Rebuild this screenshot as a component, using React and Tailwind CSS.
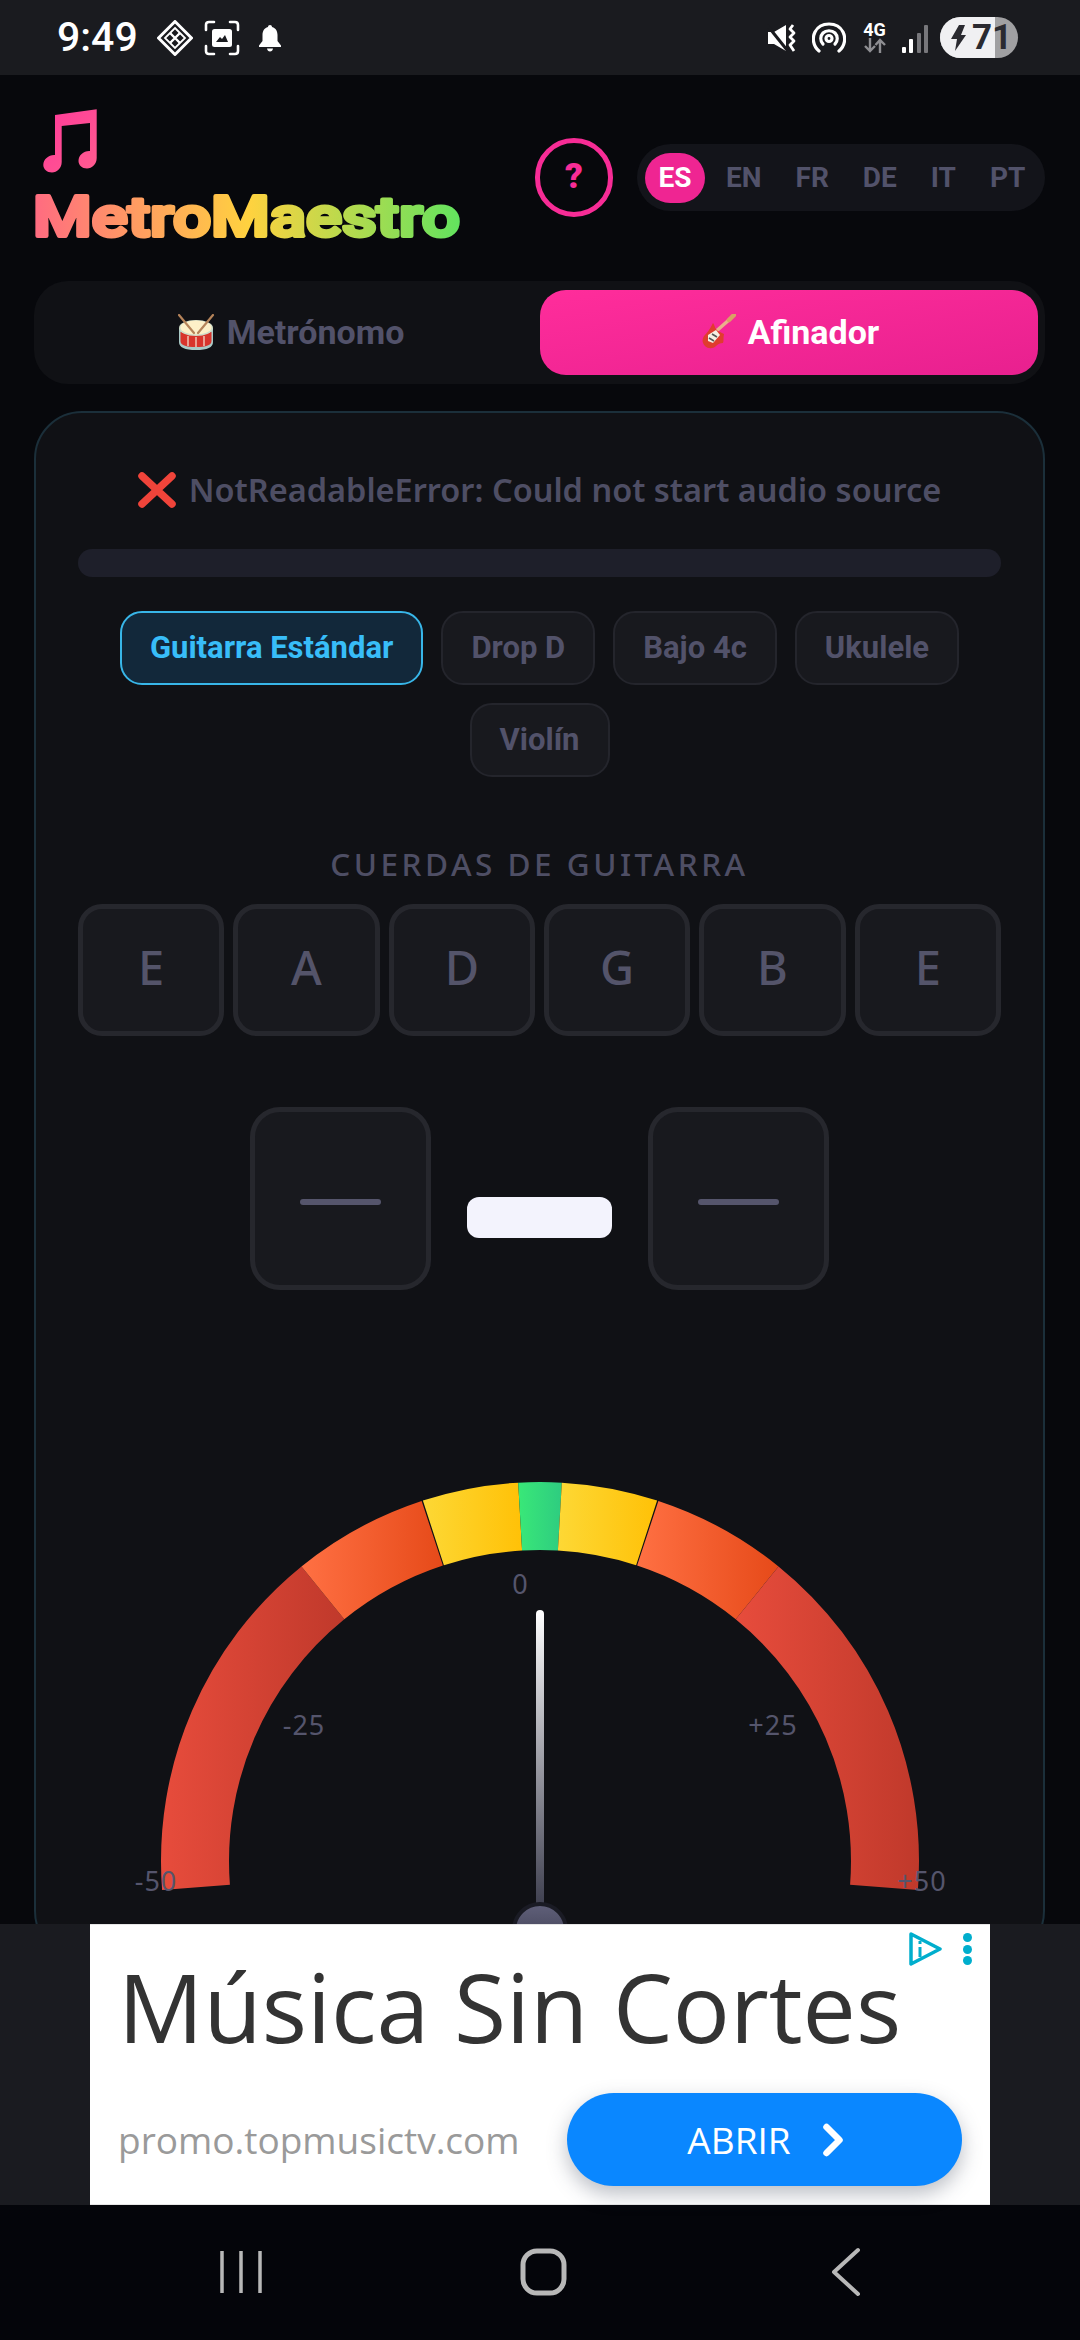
import { ChevronRight } from "lucide-react"

const presets = ["Drop D", "Bajo 4c", "Ukulele", "Violín"]
const strings = ["E", "A", "D", "G", "B", "E"]
const langs = ["EN", "FR", "DE", "IT", "PT"]

// gauge geometry, in page coordinates
const CX = 540
const CY = 1864
const R_OUT = 379
const R_IN = 311

const polar = (r, deg) => {
  const a = (deg * Math.PI) / 180
  return [CX + r * Math.sin(a), CY - r * Math.cos(a)]
}

const arc = (from, to) => {
  const [x1, y1] = polar(R_OUT, from)
  const [x2, y2] = polar(R_OUT, to)
  const [x3, y3] = polar(R_IN, to)
  const [x4, y4] = polar(R_IN, from)
  return `M${x1} ${y1}A${R_OUT} ${R_OUT} 0 0 1 ${x2} ${y2}L${x3} ${y3}A${R_IN} ${R_IN} 0 0 0 ${x4} ${y4}Z`
}

const segments = [
  { from: -94.4, to: -39, fill: "url(#red)" },
  { from: -39, to: -18.2, fill: "url(#orange)" },
  { from: -18, to: -3.3, fill: "url(#yellow)" },
  { from: -3.3, to: 3.3, fill: "url(#green)" },
  { from: 3.3, to: 18, fill: "url(#yellow)" },
  { from: 18.2, to: 39, fill: "url(#orange)" },
  { from: 39, to: 94.4, fill: "url(#red)" },
]

function StatusBar() {
  return (
    <div className="h-[75px] shrink-0 bg-[#1a1b1f] flex items-center pl-[57px] pr-[62px] text-white">
      <span className="w-[80px] font-[Roboto] font-medium text-[41px] leading-none mr-[20px]">9:49</span>
      <svg width="36" height="36" viewBox="0 0 36 36" fill="none" stroke="white" strokeWidth="2" className="mr-[11px]">
        <path d="M18 1.500L34.500 18L18 34.500L1.500 18Z" strokeWidth="3" strokeLinejoin="round" />
        <path d="M18 8L28 18L18 28L8 18Z" strokeWidth="1.800" />
        <path d="M13 13L23 23M23 13L13 23" strokeWidth="2.400" />
      </svg>
      <svg width="36" height="36" viewBox="0 0 36 36" fill="none" stroke="white" strokeWidth="2.600" strokeLinecap="round" className="mr-[18px]">
        <path d="M2 10V5Q2 2 5 2H10M26 2H31Q34 2 34 5V10M34 26V31Q34 34 31 34H26M10 34H5Q2 34 2 31V26" />
        <rect x="8" y="9" width="20" height="18" rx="2.500" fill="white" stroke="none" />
        <path d="M12 22L16 17L18 19L21 15L24 22Z" fill="#1a1b1f" stroke="none" />
      </svg>
      <svg width="24" height="28" viewBox="0 0 24 28" fill="white">
        <path d="M12 1C13.200 1 14 1.800 14 3C18 4 19.500 7.500 19.500 11V17L23 21.500V23H1V21.500L4.500 17V11C4.500 7.500 6 4 10 3C10 1.800 10.800 1 12 1Z" />
        <path d="M9 24.500H15Q14.500 27.500 12 27.500Q9.500 27.500 9 24.500Z" />
      </svg>
      <div className="flex-1" />
      <svg width="30" height="30" viewBox="0 0 30 30" fill="white" className="mr-[15px]">
        <path d="M1 9H7L19 2V28L7 21H1Z" />
        <path d="M0 2L20 27" stroke="#1a1b1f" strokeWidth="3" />
        <path d="M26 2L23 6L27 10L23 14L27 18L23 22L27 28" fill="none" stroke="white" strokeWidth="2.800" strokeLinejoin="round" />
      </svg>
      <svg width="34" height="32" viewBox="0 0 34 32" fill="none" stroke="white" strokeWidth="3.200" strokeLinecap="round" className="mr-[17px]">
        <path d="M7 29C1 24 0 16 3 10C6 4 11 2 17 2C23 2 28 4 31 10C34 16 33 24 27 29" />
        <path d="M11 22C8 19 8 14 11 11C14 8 20 8 23 11C26 14 26 19 23 22" />
        <circle cx="17" cy="16.500" r="3" />
      </svg>
      <div className="w-[24px] mr-[15px] flex flex-col items-center">
        <span className="font-[Roboto] font-bold text-[18px] leading-[15px]">4G</span>
        <svg width="24" height="15" viewBox="0 0 24 15" fill="none" stroke="#8e8e92" strokeWidth="2.400" className="mt-[1px]">
          <path d="M7 0V13M2 8L7 13L12 8" />
          <path d="M17 15V2M12.500 7L17 2L22 7" />
        </svg>
      </div>
      <div className="flex items-end gap-[3.500px] h-[29px] mr-[12px] mt-[2px]">
        <div className="w-[4px] h-[6px] bg-white rounded-[1px]" />
        <div className="w-[4px] h-[14px] bg-white rounded-[1px]" />
        <div className="w-[4px] h-[20px] bg-[#77777b] rounded-[1px]" />
        <div className="w-[4px] h-[28px] bg-[#77777b] rounded-[1px]" />
      </div>
      <div className="w-[78px] h-[41px] rounded-full overflow-hidden relative flex bg-[#a0a0a2]">
        <div className="w-[55px] bg-[#f0f0f2]" />
        <div className="absolute inset-0 flex items-center pl-[10px] text-[#2a2a30]">
          <svg width="16" height="26" viewBox="0 0 16 26" fill="currentColor" className="mr-[6px]">
            <path d="M9 0H15L11 10H16L5 26L7 14H1Z" />
          </svg>
          <span className="font-[Roboto] font-bold text-[35px] leading-none">71</span>
        </div>
      </div>
    </div>
  )
}

function Header() {
  return (
    <div className="h-[206px] shrink-0 flex items-start justify-between pl-[34px] pr-[35px]">
      <div className="mt-[33px] w-[460px]">
        <svg width="64" height="66" viewBox="0 0 64 66" className="ml-[8px] block">
          <defs>
            <linearGradient id="note" x1="0" y1="0" x2="1" y2="1">
              <stop offset="0" stopColor="#ff3a9a" />
              <stop offset="1" stopColor="#ff5c8f" />
            </linearGradient>
          </defs>
          <path
            fill="url(#note)"
            d="M13 7L54.700 1.300V50C54.700 56 50 60.500 45 60.500C40 60.500 36.500 57 36.500 53C36.500 47 42 42.500 48 43V15L19.700 18V54C19.700 60 15 64.500 10 64.500C5 64.500 1.300 61 1.300 57C1.300 51 7 46.500 13 47Z"
          />
        </svg>
        <svg width="460" height="80" viewBox="0 0 460 80" className="block -mt-[1px]">
          <defs>
            <linearGradient id="brand" gradientUnits="userSpaceOnUse" x1="0" y1="0" x2="430" y2="0">
              <stop offset="0" stopColor="#ff6b81" />
              <stop offset="0.5" stopColor="#ffd23f" />
              <stop offset="1" stopColor="#5fe35f" />
            </linearGradient>
          </defs>
          <text
            x="-1"
            y="63"
            textLength="427"
            lengthAdjust="spacingAndGlyphs"
            fill="url(#brand)"
            stroke="url(#brand)"
            strokeWidth="4"
            strokeLinejoin="round"
            className="font-[Roboto] font-medium text-[55px]"
          >
            MetroMaestro
          </text>
        </svg>
      </div>
      <div className="flex items-center mt-[63px]">
        <div className="w-[78px] h-[79px] rounded-full border-[5px] border-[#f72c96] flex items-center justify-center font-[Roboto] font-black text-[35px] text-[#f72c96] mr-[24px]">
          ?
        </div>
        <div className="w-[408px] h-[67px] rounded-full bg-[#13141a] flex items-center pl-[8px] gap-[8px] font-[Roboto] font-bold text-[28px] text-[#52526a]">
          <div className="w-[60px] h-[50px] rounded-full bg-[#ef2592] text-white flex items-center justify-center">ES</div>
          {langs.map((l) => (
            <div key={l} className="px-[13px] leading-[50px]">{l}</div>
          ))}
        </div>
      </div>
    </div>
  )
}

function Tabs() {
  return (
    <div className="ml-[34px] mr-[35px] h-[103px] shrink-0 rounded-[34px] bg-[#101115] flex items-center pl-[8px] pr-[7px] font-[Roboto] font-bold text-[34px]">
      <div className="flex-1 flex items-center justify-center text-[#52526a] gap-[12px]">
        <svg width="37" height="38" viewBox="0 0 37 38">
          <path d="M1 14V28Q1 36 18 36Q35 36 35 28V14Z" fill="#a9c9c6" />
          <path d="M2.500 18V27Q2.500 33 18 33Q33.500 33 33.500 27V18Z" fill="#d8342c" />
          <path d="M10 22V32M18 23V33M26 22V32" stroke="#f5d8c8" strokeWidth="1.300" />
          <ellipse cx="18" cy="14" rx="17" ry="8" fill="#cfdcc8" />
          <ellipse cx="18" cy="13.500" rx="15.500" ry="7" fill="#fdf0c8" />
          <path d="M1 1L16 19M35 1L20 19" stroke="#b5845a" strokeWidth="2.200" strokeLinecap="round" />
        </svg>
        Metrónomo
      </div>
      <div className="w-[498px] h-[85px] rounded-[26px] bg-linear-to-br from-[#ff2d9b] to-[#e8208f] flex items-center justify-center text-white gap-[12px]">
        <svg width="37" height="38" viewBox="0 0 37 38">
          <path d="M14 20L31 5" stroke="#eab08c" strokeWidth="3.500" />
          <path d="M30 6L35 1" stroke="#d9a066" strokeWidth="4.500" strokeLinecap="round" />
          <path d="M14 9C16 12 16 15 19 17L25 20C24 24 25 27 24 29C21 29 19 30 17 32C14 35 9 35 6 32C3 29 3 25 5 22C8 19 11 15 14 9Z" fill="#e03c2e" />
          <path d="M9 21L17 16L21 21L14 29L9 27Z" fill="#f6efe2" />
          <path d="M10 24L15 27M13 20L18 23" stroke="#555" strokeWidth="1.600" />
        </svg>
        Afinador
      </div>
    </div>
  )
}

function Gauge() {
  return (
    <svg width="923" height="500" viewBox="78 1460 923 500" className="block mt-[167px]">
      <defs>
        <linearGradient id="red">
          <stop offset="0" stopColor="#e74c3c" />
          <stop offset="1" stopColor="#c0392b" />
        </linearGradient>
        <linearGradient id="orange">
          <stop offset="0" stopColor="#ff7043" />
          <stop offset="1" stopColor="#e64a19" />
        </linearGradient>
        <linearGradient id="yellow">
          <stop offset="0" stopColor="#fdd835" />
          <stop offset="1" stopColor="#ffc107" />
        </linearGradient>
        <linearGradient id="green">
          <stop offset="0" stopColor="#39e878" />
          <stop offset="1" stopColor="#2ecc80" />
        </linearGradient>
        <linearGradient id="needle" x1="0" y1="0" x2="0" y2="1">
          <stop offset="0" stopColor="#ffffff" />
          <stop offset="1" stopColor="#3c3d4d" />
        </linearGradient>
        <linearGradient id="pivot" x1="0" y1="0" x2="0" y2="1">
          <stop offset="0" stopColor="#60607a" />
          <stop offset="1" stopColor="#38384a" />
        </linearGradient>
      </defs>
      {segments.map((s) => (
        <path key={s.from} d={arc(s.from, s.to)} fill={s.fill} />
      ))}
      <g className="font-['Noto_Sans',sans-serif] text-[27px] tracking-[1px]" fill="#55556c" textAnchor="middle">
        <text x="520.500" y="1597">0</text>
        <text x="304" y="1738">-25</text>
        <text x="773" y="1738">+25</text>
        <text x="156" y="1894">-50</text>
        <text x="922" y="1894">+50</text>
      </g>
      <rect x="536" y="1613" width="8" height="300" rx="4" fill="url(#needle)" />
      <circle cx="540" cy="1933" r="26" fill="url(#pivot)" stroke="#1a1b24" strokeWidth="4" />
    </svg>
  )
}

function Card() {
  return (
    <div className="ml-[34px] mr-[35px] mt-[27px] rounded-[48px] border-2 border-[#1b2f3a] bg-[#101115] px-[42px] h-[1600px]">
      <div className="h-[136px] flex items-center justify-center pt-[18px] gap-[13px] font-['Noto_Sans',sans-serif] font-semibold text-[32.500px] text-[#4e4e64]">
        <svg width="38" height="36" viewBox="0 0 38 36">
          <path d="M4 4L34 32M34 4L4 32" stroke="#f0443a" strokeWidth="7.500" strokeLinecap="round" />
        </svg>
        NotReadableError: Could not start audio source
      </div>
      <div className="h-[28px] rounded-full bg-[#1e1f2a]" />
      <div className="mt-[34px] flex flex-wrap justify-center gap-[18px] font-[Roboto] font-bold text-[31px] text-[#52526a]">
        <div className="h-[74px] px-[28px] rounded-[22px] border-2 border-[#38b6e8] bg-[#12283a] text-[#38bdf8] flex items-center">
          Guitarra Estándar
        </div>
        {presets.map((p) => (
          <div key={p} className="h-[74px] px-[28px] rounded-[22px] border-2 border-[#24252c] bg-[#18191e] flex items-center">
            {p}
          </div>
        ))}
      </div>
      <div className="mt-[67px] text-center font-['Noto_Sans',sans-serif] font-medium text-[31.500px] leading-[40px] tracking-[3.500px] text-[#4e4e64]">
        CUERDAS DE GUITARRA
      </div>
      <div className="mt-[20px] grid grid-cols-6 gap-[9px]">
        {strings.map((s, i) => (
          <div
            key={i}
            className="h-[132px] rounded-[24px] border-[5px] border-[#26272d] bg-[#18191e] flex items-center justify-center pb-[5px] font-['Noto_Sans',sans-serif] font-medium text-[47px] text-[#54546a]"
          >
            {s}
          </div>
        ))}
      </div>
      <div className="mt-[71px] flex items-center justify-center">
        <div className="w-[181px] h-[183px] rounded-[30px] border-[5px] border-[#26272d] bg-[#18191e] flex justify-center pt-[87px]">
          <div className="w-[81px] h-[6px] rounded-full bg-[#55556c]" />
        </div>
        <div className="w-[145px] h-[41px] mx-[36px] mt-[38px] rounded-[12px] bg-[#f3f3fd]" />
        <div className="w-[181px] h-[183px] rounded-[30px] border-[5px] border-[#26272d] bg-[#18191e] flex justify-center pt-[87px]">
          <div className="w-[81px] h-[6px] rounded-full bg-[#55556c]" />
        </div>
      </div>
      <Gauge />
    </div>
  )
}

function Ad() {
  return (
    <div className="h-[281px] shrink-0 bg-[#1a1b20] flex justify-center">
      <div className="w-[900px] bg-white border-y border-[#e6e6e6] relative font-['Open_Sans',sans-serif]">
        <div className="absolute top-[7px] right-[18px] flex items-center gap-[21px]">
          <svg width="33" height="34" viewBox="0 0 33 34" fill="none" stroke="#00aecd" strokeWidth="3.500">
            <path d="M2 2L31 17L2 32Z" strokeLinejoin="round" />
            <path d="M11 15V25M11 9V12" strokeWidth="3" />
          </svg>
          <div className="flex flex-col gap-[2.500px]">
            <div className="w-[9px] h-[9px] rounded-full bg-[#00aecd]" />
            <div className="w-[9px] h-[9px] rounded-full bg-[#00aecd]" />
            <div className="w-[9px] h-[9px] rounded-full bg-[#00aecd]" />
          </div>
        </div>
        <div className="pl-[28px] pt-[17px] text-[95px] leading-[128px] text-[#333333]">Música Sin Cortes</div>
        <div className="flex items-center justify-between pl-[28px] pr-[28px] mt-[23px]">
          <span className="text-[37px] text-[#9a9a9a]">promo.topmusictv.com</span>
          <div className="w-[395px] h-[93px] rounded-full bg-[#0a87ff] shadow-[0_8px_20px_rgba(60,70,90,0.35)] flex items-center justify-center pl-[17px] text-white text-[37px] gap-[16px]">
            ABRIR
            <ChevronRight size={52} strokeWidth={3} />
          </div>
        </div>
      </div>
    </div>
  )
}

function NavBar() {
  return (
    <div className="h-[135px] shrink-0 bg-[#04050a]">
      <svg width="1080" height="135" viewBox="0 2205 1080 135" fill="none" stroke="#b8b8b8" className="block">
        <path d="M222 2251V2293M241 2251V2293M260 2251V2293" strokeWidth="3.500" />
        <rect x="523" y="2251" width="41" height="42" rx="14" strokeWidth="5" />
        <path d="M858 2250L834 2272L858 2294" strokeWidth="4" strokeLinecap="round" strokeLinejoin="round" />
      </svg>
    </div>
  )
}

export default function App() {
  return (
    <div className="w-[1080px] h-[2340px] bg-[#07080c] flex flex-col overflow-hidden">
      <StatusBar />
      <div className="flex-1 min-h-0 overflow-hidden flex flex-col">
        <Header />
        <Tabs />
        <Card />
      </div>
      <Ad />
      <NavBar />
    </div>
  )
}
